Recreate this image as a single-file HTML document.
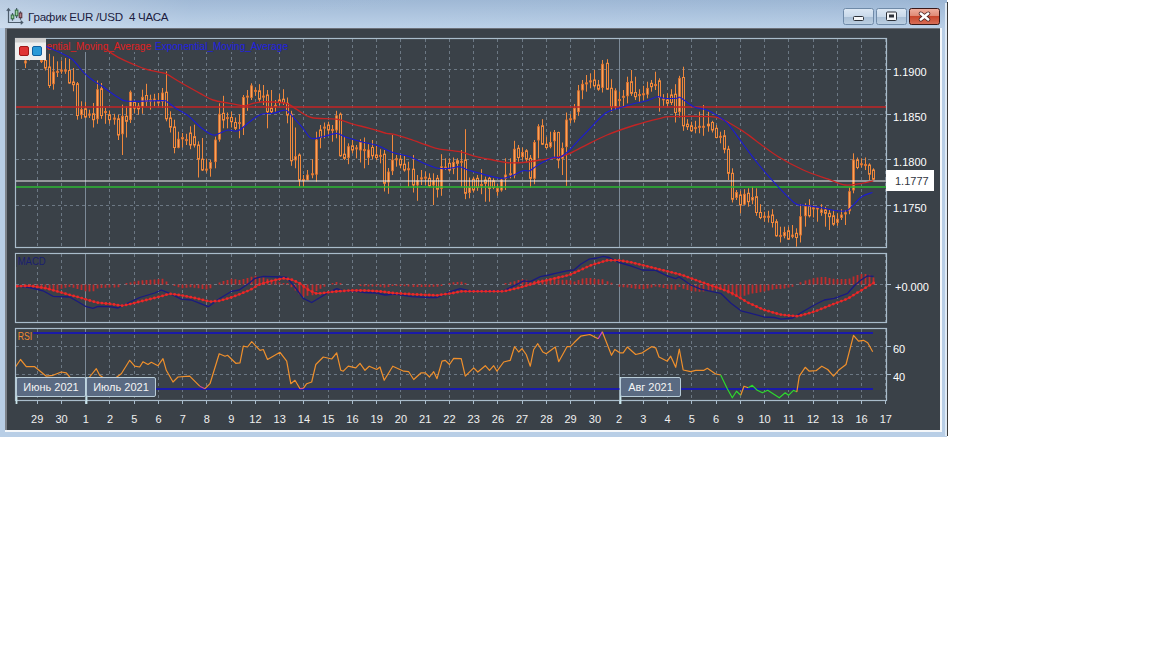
<!DOCTYPE html><html><head><meta charset="utf-8"><style>
html,body{margin:0;padding:0;background:#fff;width:1152px;height:648px;overflow:hidden}
svg{display:block}text{font-family:"Liberation Sans",sans-serif}
</style></head><body>
<svg width="1152" height="648" viewBox="0 0 1152 648">
<defs>
<linearGradient id="tb" x1="0" y1="0" x2="0" y2="1"><stop offset="0" stop-color="#9cb6d4"/><stop offset="1" stop-color="#b9cfe7"/></linearGradient>
<linearGradient id="tbv" x1="0" y1="0" x2="1" y2="0"><stop offset="0" stop-color="#ffffff" stop-opacity="0.28"/><stop offset="0.2" stop-color="#ffffff" stop-opacity="0.05"/><stop offset="1" stop-color="#ffffff" stop-opacity="0"/></linearGradient>
<linearGradient id="btn" x1="0" y1="0" x2="0" y2="1"><stop offset="0" stop-color="#dde8f4"/><stop offset="0.5" stop-color="#c9d9ea"/><stop offset="0.52" stop-color="#a9bfd6"/><stop offset="1" stop-color="#bccfe2"/></linearGradient>
<linearGradient id="cls" x1="0" y1="0" x2="0" y2="1"><stop offset="0" stop-color="#f0b0a0"/><stop offset="0.45" stop-color="#e08a76"/><stop offset="0.5" stop-color="#c8462c"/><stop offset="1" stop-color="#d8705a"/></linearGradient>
<clipPath id="cmain"><rect x="16" y="39" width="870" height="208"/></clipPath>
<clipPath id="cmacd"><rect x="16" y="254" width="870" height="68"/></clipPath>
<clipPath id="crsi"><rect x="16" y="329" width="870" height="71"/></clipPath>
<clipPath id="rsilow"><rect x="16" y="389" width="870" height="12"/></clipPath>
<clipPath id="rsihigh"><rect x="16" y="329" width="870" height="4"/></clipPath>
</defs>
<rect x="0" y="0" width="947" height="437" fill="#b8cee6"/>
<rect x="0" y="0" width="947" height="28" fill="url(#tb)"/>
<rect x="0" y="0" width="947" height="28" fill="url(#tbv)"/>
<rect x="945" y="3" width="2" height="433" fill="#dfeaf5"/>
<rect x="947" y="2" width="1" height="434" fill="#3a3a3a"/>
<rect x="5" y="28" width="937" height="404" fill="#f4f7fa"/>
<rect x="5" y="28" width="935" height="1" fill="#6c7078"/>
<rect x="5" y="28" width="2" height="402" fill="#7c828a"/>
<rect x="7" y="29" width="933" height="401" fill="#3a4148"/>
<g fill="none" stroke="#4c5c6c" stroke-width="1.2">
<path d="M8.5 9 V22.5 H22.5"/><path d="M6.8 10.8 L8.5 8.8 L10.2 10.8"/><path d="M20.7 20.8 L22.7 22.5 L20.7 24.2"/>
<path d="M12.5 13 V20.7 M16.6 8 V18 M20.5 11.2 V19.7"/>
</g>
<rect x="11.2" y="15" width="2.6" height="3.8" fill="#9fd0a0" stroke="#2e6a3e" stroke-width="1"/>
<rect x="15.3" y="10.1" width="2.6" height="5.7" fill="#9fd0a0" stroke="#2e6a3e" stroke-width="1"/>
<rect x="19.2" y="13" width="2.6" height="4.7" fill="#b08088" stroke="#5a3038" stroke-width="1"/>
<text x="28" y="20.5" font-size="11.6" fill="#1c1c40" xml:space="preserve" textLength="140.5" lengthAdjust="spacing">График EUR /USD  4 ЧАСА</text>
<rect x="843.5" y="8.5" width="30" height="16" rx="2" fill="url(#btn)" stroke="#6f8aa8" stroke-width="1"/>
<rect x="876.5" y="8.5" width="30" height="16" rx="2" fill="url(#btn)" stroke="#6f8aa8" stroke-width="1"/>
<rect x="909.5" y="8.5" width="30" height="16" rx="2" fill="url(#cls)" stroke="#3a1818" stroke-width="1"/>
<rect x="853.5" y="16.5" width="10" height="4" rx="1" fill="#f4f6f8" stroke="#2c3038" stroke-width="1"/>
<rect x="886.5" y="12" width="10" height="8.5" rx="1" fill="#f4f6f8" stroke="#2c3038" stroke-width="1"/>
<rect x="889" y="14.5" width="5" height="3" fill="#2c3038"/>
<path d="M920.8 13.6 L928.2 19.4 M928.2 13.6 L920.8 19.4" stroke="#4a2424" stroke-width="4.2" stroke-linecap="round"/>
<path d="M920.8 13.6 L928.2 19.4 M928.2 13.6 L920.8 19.4" stroke="#ffffff" stroke-width="2.6" stroke-linecap="round"/>
<line x1="37.5" y1="39" x2="37.5" y2="247" stroke="#6c7884" stroke-width="1" stroke-dasharray="3,3"/>
<line x1="61.5" y1="39" x2="61.5" y2="247" stroke="#6c7884" stroke-width="1" stroke-dasharray="3,3"/>
<line x1="85.5" y1="39" x2="85.5" y2="247" stroke="#7c8a98" stroke-width="1"/>
<line x1="109.5" y1="39" x2="109.5" y2="247" stroke="#6c7884" stroke-width="1" stroke-dasharray="3,3"/>
<line x1="134.5" y1="39" x2="134.5" y2="247" stroke="#6c7884" stroke-width="1" stroke-dasharray="3,3"/>
<line x1="158.5" y1="39" x2="158.5" y2="247" stroke="#6c7884" stroke-width="1" stroke-dasharray="3,3"/>
<line x1="182.5" y1="39" x2="182.5" y2="247" stroke="#6c7884" stroke-width="1" stroke-dasharray="3,3"/>
<line x1="206.5" y1="39" x2="206.5" y2="247" stroke="#6c7884" stroke-width="1" stroke-dasharray="3,3"/>
<line x1="231.5" y1="39" x2="231.5" y2="247" stroke="#6c7884" stroke-width="1" stroke-dasharray="3,3"/>
<line x1="255.5" y1="39" x2="255.5" y2="247" stroke="#6c7884" stroke-width="1" stroke-dasharray="3,3"/>
<line x1="279.5" y1="39" x2="279.5" y2="247" stroke="#6c7884" stroke-width="1" stroke-dasharray="3,3"/>
<line x1="303.5" y1="39" x2="303.5" y2="247" stroke="#6c7884" stroke-width="1" stroke-dasharray="3,3"/>
<line x1="328.5" y1="39" x2="328.5" y2="247" stroke="#6c7884" stroke-width="1" stroke-dasharray="3,3"/>
<line x1="352.5" y1="39" x2="352.5" y2="247" stroke="#6c7884" stroke-width="1" stroke-dasharray="3,3"/>
<line x1="376.5" y1="39" x2="376.5" y2="247" stroke="#6c7884" stroke-width="1" stroke-dasharray="3,3"/>
<line x1="400.5" y1="39" x2="400.5" y2="247" stroke="#6c7884" stroke-width="1" stroke-dasharray="3,3"/>
<line x1="425.5" y1="39" x2="425.5" y2="247" stroke="#6c7884" stroke-width="1" stroke-dasharray="3,3"/>
<line x1="449.5" y1="39" x2="449.5" y2="247" stroke="#6c7884" stroke-width="1" stroke-dasharray="3,3"/>
<line x1="473.5" y1="39" x2="473.5" y2="247" stroke="#6c7884" stroke-width="1" stroke-dasharray="3,3"/>
<line x1="497.5" y1="39" x2="497.5" y2="247" stroke="#6c7884" stroke-width="1" stroke-dasharray="3,3"/>
<line x1="522.5" y1="39" x2="522.5" y2="247" stroke="#6c7884" stroke-width="1" stroke-dasharray="3,3"/>
<line x1="546.5" y1="39" x2="546.5" y2="247" stroke="#6c7884" stroke-width="1" stroke-dasharray="3,3"/>
<line x1="570.5" y1="39" x2="570.5" y2="247" stroke="#6c7884" stroke-width="1" stroke-dasharray="3,3"/>
<line x1="594.5" y1="39" x2="594.5" y2="247" stroke="#6c7884" stroke-width="1" stroke-dasharray="3,3"/>
<line x1="619.5" y1="39" x2="619.5" y2="247" stroke="#7c8a98" stroke-width="1"/>
<line x1="643.5" y1="39" x2="643.5" y2="247" stroke="#6c7884" stroke-width="1" stroke-dasharray="3,3"/>
<line x1="667.5" y1="39" x2="667.5" y2="247" stroke="#6c7884" stroke-width="1" stroke-dasharray="3,3"/>
<line x1="691.5" y1="39" x2="691.5" y2="247" stroke="#6c7884" stroke-width="1" stroke-dasharray="3,3"/>
<line x1="716.5" y1="39" x2="716.5" y2="247" stroke="#6c7884" stroke-width="1" stroke-dasharray="3,3"/>
<line x1="740.5" y1="39" x2="740.5" y2="247" stroke="#6c7884" stroke-width="1" stroke-dasharray="3,3"/>
<line x1="764.5" y1="39" x2="764.5" y2="247" stroke="#6c7884" stroke-width="1" stroke-dasharray="3,3"/>
<line x1="788.5" y1="39" x2="788.5" y2="247" stroke="#6c7884" stroke-width="1" stroke-dasharray="3,3"/>
<line x1="813.5" y1="39" x2="813.5" y2="247" stroke="#6c7884" stroke-width="1" stroke-dasharray="3,3"/>
<line x1="837.5" y1="39" x2="837.5" y2="247" stroke="#6c7884" stroke-width="1" stroke-dasharray="3,3"/>
<line x1="861.5" y1="39" x2="861.5" y2="247" stroke="#6c7884" stroke-width="1" stroke-dasharray="3,3"/>
<line x1="885.5" y1="39" x2="885.5" y2="247" stroke="#6c7884" stroke-width="1" stroke-dasharray="3,3"/>
<line x1="37.5" y1="254" x2="37.5" y2="322" stroke="#6c7884" stroke-width="1" stroke-dasharray="3,3"/>
<line x1="61.5" y1="254" x2="61.5" y2="322" stroke="#6c7884" stroke-width="1" stroke-dasharray="3,3"/>
<line x1="85.5" y1="254" x2="85.5" y2="322" stroke="#7c8a98" stroke-width="1"/>
<line x1="109.5" y1="254" x2="109.5" y2="322" stroke="#6c7884" stroke-width="1" stroke-dasharray="3,3"/>
<line x1="134.5" y1="254" x2="134.5" y2="322" stroke="#6c7884" stroke-width="1" stroke-dasharray="3,3"/>
<line x1="158.5" y1="254" x2="158.5" y2="322" stroke="#6c7884" stroke-width="1" stroke-dasharray="3,3"/>
<line x1="182.5" y1="254" x2="182.5" y2="322" stroke="#6c7884" stroke-width="1" stroke-dasharray="3,3"/>
<line x1="206.5" y1="254" x2="206.5" y2="322" stroke="#6c7884" stroke-width="1" stroke-dasharray="3,3"/>
<line x1="231.5" y1="254" x2="231.5" y2="322" stroke="#6c7884" stroke-width="1" stroke-dasharray="3,3"/>
<line x1="255.5" y1="254" x2="255.5" y2="322" stroke="#6c7884" stroke-width="1" stroke-dasharray="3,3"/>
<line x1="279.5" y1="254" x2="279.5" y2="322" stroke="#6c7884" stroke-width="1" stroke-dasharray="3,3"/>
<line x1="303.5" y1="254" x2="303.5" y2="322" stroke="#6c7884" stroke-width="1" stroke-dasharray="3,3"/>
<line x1="328.5" y1="254" x2="328.5" y2="322" stroke="#6c7884" stroke-width="1" stroke-dasharray="3,3"/>
<line x1="352.5" y1="254" x2="352.5" y2="322" stroke="#6c7884" stroke-width="1" stroke-dasharray="3,3"/>
<line x1="376.5" y1="254" x2="376.5" y2="322" stroke="#6c7884" stroke-width="1" stroke-dasharray="3,3"/>
<line x1="400.5" y1="254" x2="400.5" y2="322" stroke="#6c7884" stroke-width="1" stroke-dasharray="3,3"/>
<line x1="425.5" y1="254" x2="425.5" y2="322" stroke="#6c7884" stroke-width="1" stroke-dasharray="3,3"/>
<line x1="449.5" y1="254" x2="449.5" y2="322" stroke="#6c7884" stroke-width="1" stroke-dasharray="3,3"/>
<line x1="473.5" y1="254" x2="473.5" y2="322" stroke="#6c7884" stroke-width="1" stroke-dasharray="3,3"/>
<line x1="497.5" y1="254" x2="497.5" y2="322" stroke="#6c7884" stroke-width="1" stroke-dasharray="3,3"/>
<line x1="522.5" y1="254" x2="522.5" y2="322" stroke="#6c7884" stroke-width="1" stroke-dasharray="3,3"/>
<line x1="546.5" y1="254" x2="546.5" y2="322" stroke="#6c7884" stroke-width="1" stroke-dasharray="3,3"/>
<line x1="570.5" y1="254" x2="570.5" y2="322" stroke="#6c7884" stroke-width="1" stroke-dasharray="3,3"/>
<line x1="594.5" y1="254" x2="594.5" y2="322" stroke="#6c7884" stroke-width="1" stroke-dasharray="3,3"/>
<line x1="619.5" y1="254" x2="619.5" y2="322" stroke="#7c8a98" stroke-width="1"/>
<line x1="643.5" y1="254" x2="643.5" y2="322" stroke="#6c7884" stroke-width="1" stroke-dasharray="3,3"/>
<line x1="667.5" y1="254" x2="667.5" y2="322" stroke="#6c7884" stroke-width="1" stroke-dasharray="3,3"/>
<line x1="691.5" y1="254" x2="691.5" y2="322" stroke="#6c7884" stroke-width="1" stroke-dasharray="3,3"/>
<line x1="716.5" y1="254" x2="716.5" y2="322" stroke="#6c7884" stroke-width="1" stroke-dasharray="3,3"/>
<line x1="740.5" y1="254" x2="740.5" y2="322" stroke="#6c7884" stroke-width="1" stroke-dasharray="3,3"/>
<line x1="764.5" y1="254" x2="764.5" y2="322" stroke="#6c7884" stroke-width="1" stroke-dasharray="3,3"/>
<line x1="788.5" y1="254" x2="788.5" y2="322" stroke="#6c7884" stroke-width="1" stroke-dasharray="3,3"/>
<line x1="813.5" y1="254" x2="813.5" y2="322" stroke="#6c7884" stroke-width="1" stroke-dasharray="3,3"/>
<line x1="837.5" y1="254" x2="837.5" y2="322" stroke="#6c7884" stroke-width="1" stroke-dasharray="3,3"/>
<line x1="861.5" y1="254" x2="861.5" y2="322" stroke="#6c7884" stroke-width="1" stroke-dasharray="3,3"/>
<line x1="885.5" y1="254" x2="885.5" y2="322" stroke="#6c7884" stroke-width="1" stroke-dasharray="3,3"/>
<line x1="37.5" y1="329" x2="37.5" y2="400" stroke="#6c7884" stroke-width="1" stroke-dasharray="3,3"/>
<line x1="61.5" y1="329" x2="61.5" y2="400" stroke="#6c7884" stroke-width="1" stroke-dasharray="3,3"/>
<line x1="85.5" y1="329" x2="85.5" y2="400" stroke="#7c8a98" stroke-width="1"/>
<line x1="109.5" y1="329" x2="109.5" y2="400" stroke="#6c7884" stroke-width="1" stroke-dasharray="3,3"/>
<line x1="134.5" y1="329" x2="134.5" y2="400" stroke="#6c7884" stroke-width="1" stroke-dasharray="3,3"/>
<line x1="158.5" y1="329" x2="158.5" y2="400" stroke="#6c7884" stroke-width="1" stroke-dasharray="3,3"/>
<line x1="182.5" y1="329" x2="182.5" y2="400" stroke="#6c7884" stroke-width="1" stroke-dasharray="3,3"/>
<line x1="206.5" y1="329" x2="206.5" y2="400" stroke="#6c7884" stroke-width="1" stroke-dasharray="3,3"/>
<line x1="231.5" y1="329" x2="231.5" y2="400" stroke="#6c7884" stroke-width="1" stroke-dasharray="3,3"/>
<line x1="255.5" y1="329" x2="255.5" y2="400" stroke="#6c7884" stroke-width="1" stroke-dasharray="3,3"/>
<line x1="279.5" y1="329" x2="279.5" y2="400" stroke="#6c7884" stroke-width="1" stroke-dasharray="3,3"/>
<line x1="303.5" y1="329" x2="303.5" y2="400" stroke="#6c7884" stroke-width="1" stroke-dasharray="3,3"/>
<line x1="328.5" y1="329" x2="328.5" y2="400" stroke="#6c7884" stroke-width="1" stroke-dasharray="3,3"/>
<line x1="352.5" y1="329" x2="352.5" y2="400" stroke="#6c7884" stroke-width="1" stroke-dasharray="3,3"/>
<line x1="376.5" y1="329" x2="376.5" y2="400" stroke="#6c7884" stroke-width="1" stroke-dasharray="3,3"/>
<line x1="400.5" y1="329" x2="400.5" y2="400" stroke="#6c7884" stroke-width="1" stroke-dasharray="3,3"/>
<line x1="425.5" y1="329" x2="425.5" y2="400" stroke="#6c7884" stroke-width="1" stroke-dasharray="3,3"/>
<line x1="449.5" y1="329" x2="449.5" y2="400" stroke="#6c7884" stroke-width="1" stroke-dasharray="3,3"/>
<line x1="473.5" y1="329" x2="473.5" y2="400" stroke="#6c7884" stroke-width="1" stroke-dasharray="3,3"/>
<line x1="497.5" y1="329" x2="497.5" y2="400" stroke="#6c7884" stroke-width="1" stroke-dasharray="3,3"/>
<line x1="522.5" y1="329" x2="522.5" y2="400" stroke="#6c7884" stroke-width="1" stroke-dasharray="3,3"/>
<line x1="546.5" y1="329" x2="546.5" y2="400" stroke="#6c7884" stroke-width="1" stroke-dasharray="3,3"/>
<line x1="570.5" y1="329" x2="570.5" y2="400" stroke="#6c7884" stroke-width="1" stroke-dasharray="3,3"/>
<line x1="594.5" y1="329" x2="594.5" y2="400" stroke="#6c7884" stroke-width="1" stroke-dasharray="3,3"/>
<line x1="619.5" y1="329" x2="619.5" y2="400" stroke="#7c8a98" stroke-width="1"/>
<line x1="643.5" y1="329" x2="643.5" y2="400" stroke="#6c7884" stroke-width="1" stroke-dasharray="3,3"/>
<line x1="667.5" y1="329" x2="667.5" y2="400" stroke="#6c7884" stroke-width="1" stroke-dasharray="3,3"/>
<line x1="691.5" y1="329" x2="691.5" y2="400" stroke="#6c7884" stroke-width="1" stroke-dasharray="3,3"/>
<line x1="716.5" y1="329" x2="716.5" y2="400" stroke="#6c7884" stroke-width="1" stroke-dasharray="3,3"/>
<line x1="740.5" y1="329" x2="740.5" y2="400" stroke="#6c7884" stroke-width="1" stroke-dasharray="3,3"/>
<line x1="764.5" y1="329" x2="764.5" y2="400" stroke="#6c7884" stroke-width="1" stroke-dasharray="3,3"/>
<line x1="788.5" y1="329" x2="788.5" y2="400" stroke="#6c7884" stroke-width="1" stroke-dasharray="3,3"/>
<line x1="813.5" y1="329" x2="813.5" y2="400" stroke="#6c7884" stroke-width="1" stroke-dasharray="3,3"/>
<line x1="837.5" y1="329" x2="837.5" y2="400" stroke="#6c7884" stroke-width="1" stroke-dasharray="3,3"/>
<line x1="861.5" y1="329" x2="861.5" y2="400" stroke="#6c7884" stroke-width="1" stroke-dasharray="3,3"/>
<line x1="885.5" y1="329" x2="885.5" y2="400" stroke="#6c7884" stroke-width="1" stroke-dasharray="3,3"/>
<line x1="16" y1="69.5" x2="886" y2="69.5" stroke="#6c7884" stroke-width="1" stroke-dasharray="3,3"/>
<line x1="16" y1="114.5" x2="886" y2="114.5" stroke="#6c7884" stroke-width="1" stroke-dasharray="3,3"/>
<line x1="16" y1="159.5" x2="886" y2="159.5" stroke="#6c7884" stroke-width="1" stroke-dasharray="3,3"/>
<line x1="16" y1="205.5" x2="886" y2="205.5" stroke="#6c7884" stroke-width="1" stroke-dasharray="3,3"/>
<line x1="16" y1="284.5" x2="886" y2="284.5" stroke="#6c7884" stroke-width="1" stroke-dasharray="3,3"/>
<line x1="16" y1="346.5" x2="886" y2="346.5" stroke="#6c7884" stroke-width="1" stroke-dasharray="3,3"/>
<line x1="16" y1="374.5" x2="886" y2="374.5" stroke="#6c7884" stroke-width="1" stroke-dasharray="3,3"/>
<rect x="15.5" y="38.5" width="871" height="209" fill="none" stroke="#a9bccb" stroke-width="1.2"/>
<rect x="15.5" y="253.5" width="871" height="69" fill="none" stroke="#a9bccb" stroke-width="1.2"/>
<rect x="15.5" y="328.5" width="871" height="72" fill="none" stroke="#a9bccb" stroke-width="1.2"/>
<line x1="886" y1="69.5" x2="891" y2="69.5" stroke="#a9bccb" stroke-width="1"/>
<line x1="886" y1="114.5" x2="891" y2="114.5" stroke="#a9bccb" stroke-width="1"/>
<line x1="886" y1="159.5" x2="891" y2="159.5" stroke="#a9bccb" stroke-width="1"/>
<line x1="886" y1="205.5" x2="891" y2="205.5" stroke="#a9bccb" stroke-width="1"/>
<line x1="886" y1="284.5" x2="891" y2="284.5" stroke="#a9bccb" stroke-width="1"/>
<line x1="886" y1="346.5" x2="891" y2="346.5" stroke="#a9bccb" stroke-width="1"/>
<line x1="886" y1="374.5" x2="891" y2="374.5" stroke="#a9bccb" stroke-width="1"/>
<line x1="37.5" y1="400" x2="37.5" y2="404" stroke="#a9bccb" stroke-width="1"/>
<line x1="61.5" y1="400" x2="61.5" y2="404" stroke="#a9bccb" stroke-width="1"/>
<line x1="85.5" y1="400" x2="85.5" y2="404" stroke="#a9bccb" stroke-width="1"/>
<line x1="109.5" y1="400" x2="109.5" y2="404" stroke="#a9bccb" stroke-width="1"/>
<line x1="134.5" y1="400" x2="134.5" y2="404" stroke="#a9bccb" stroke-width="1"/>
<line x1="158.5" y1="400" x2="158.5" y2="404" stroke="#a9bccb" stroke-width="1"/>
<line x1="182.5" y1="400" x2="182.5" y2="404" stroke="#a9bccb" stroke-width="1"/>
<line x1="206.5" y1="400" x2="206.5" y2="404" stroke="#a9bccb" stroke-width="1"/>
<line x1="231.5" y1="400" x2="231.5" y2="404" stroke="#a9bccb" stroke-width="1"/>
<line x1="255.5" y1="400" x2="255.5" y2="404" stroke="#a9bccb" stroke-width="1"/>
<line x1="279.5" y1="400" x2="279.5" y2="404" stroke="#a9bccb" stroke-width="1"/>
<line x1="303.5" y1="400" x2="303.5" y2="404" stroke="#a9bccb" stroke-width="1"/>
<line x1="328.5" y1="400" x2="328.5" y2="404" stroke="#a9bccb" stroke-width="1"/>
<line x1="352.5" y1="400" x2="352.5" y2="404" stroke="#a9bccb" stroke-width="1"/>
<line x1="376.5" y1="400" x2="376.5" y2="404" stroke="#a9bccb" stroke-width="1"/>
<line x1="400.5" y1="400" x2="400.5" y2="404" stroke="#a9bccb" stroke-width="1"/>
<line x1="425.5" y1="400" x2="425.5" y2="404" stroke="#a9bccb" stroke-width="1"/>
<line x1="449.5" y1="400" x2="449.5" y2="404" stroke="#a9bccb" stroke-width="1"/>
<line x1="473.5" y1="400" x2="473.5" y2="404" stroke="#a9bccb" stroke-width="1"/>
<line x1="497.5" y1="400" x2="497.5" y2="404" stroke="#a9bccb" stroke-width="1"/>
<line x1="522.5" y1="400" x2="522.5" y2="404" stroke="#a9bccb" stroke-width="1"/>
<line x1="546.5" y1="400" x2="546.5" y2="404" stroke="#a9bccb" stroke-width="1"/>
<line x1="570.5" y1="400" x2="570.5" y2="404" stroke="#a9bccb" stroke-width="1"/>
<line x1="594.5" y1="400" x2="594.5" y2="404" stroke="#a9bccb" stroke-width="1"/>
<line x1="619.5" y1="400" x2="619.5" y2="404" stroke="#a9bccb" stroke-width="1"/>
<line x1="643.5" y1="400" x2="643.5" y2="404" stroke="#a9bccb" stroke-width="1"/>
<line x1="667.5" y1="400" x2="667.5" y2="404" stroke="#a9bccb" stroke-width="1"/>
<line x1="691.5" y1="400" x2="691.5" y2="404" stroke="#a9bccb" stroke-width="1"/>
<line x1="716.5" y1="400" x2="716.5" y2="404" stroke="#a9bccb" stroke-width="1"/>
<line x1="740.5" y1="400" x2="740.5" y2="404" stroke="#a9bccb" stroke-width="1"/>
<line x1="764.5" y1="400" x2="764.5" y2="404" stroke="#a9bccb" stroke-width="1"/>
<line x1="788.5" y1="400" x2="788.5" y2="404" stroke="#a9bccb" stroke-width="1"/>
<line x1="813.5" y1="400" x2="813.5" y2="404" stroke="#a9bccb" stroke-width="1"/>
<line x1="837.5" y1="400" x2="837.5" y2="404" stroke="#a9bccb" stroke-width="1"/>
<line x1="861.5" y1="400" x2="861.5" y2="404" stroke="#a9bccb" stroke-width="1"/>
<line x1="885.5" y1="400" x2="885.5" y2="404" stroke="#a9bccb" stroke-width="1"/>
<g clip-path="url(#cmain)">
<rect x="16" y="39" width="274" height="13" fill="#3a4148"/>
<text x="18" y="50" font-size="11" fill="#e02020" textLength="133" lengthAdjust="spacingAndGlyphs">Exponential_Moving_Average</text>
<text x="155" y="50" font-size="11" fill="#2020e0" textLength="133" lengthAdjust="spacingAndGlyphs">Exponential_Moving_Average</text>
<path d="M25.5 59.7V68.0M29.5 55.0V60.5M33.5 55.0V60.0M37.5 55.0V60.0M41.5 59.7V63.0M45.5 54.7V70.5M49.5 53.8V88.0M53.5 56.3V89.7M57.5 61.3V77.0M61.5 60.5V73.8M65.5 58.0V73.8M69.5 58.8V83.8M73.5 68.0V91.3M77.5 82.0V119.7M81.5 101.3V118.8M85.5 102.0V118.0M89.5 109.7V118.0M93.5 103.0V127.5M97.5 80.5V123.8M101.5 83.0V118.8M105.5 108.0V123.8M109.5 110.5V123.8M114.5 113.8V124.7M118.5 114.7V140.0M122.5 104.7V155.0M126.5 106.3V137.5M130.5 90.5V123.0M134.5 101.3V113.0M138.5 103.0V114.7M142.5 89.7V113.8M146.5 83.8V106.3M150.5 94.7V109.7M154.5 93.8V106.3M158.5 93.0V106.3M162.5 88.0V108.0M166.5 71.3V121.3M170.5 111.3V132.5M174.5 119.7V153.3M178.5 131.7V148.3M182.5 133.0V147.5M186.5 133.8V145.0M190.5 126.3V149.2M194.5 124.7V147.5M198.5 141.3V177.5M202.5 138.0V171.0M206.5 158.7V172.6M210.5 160.0V176.7M215.5 136.7V168.3M219.5 103.3V141.7M223.5 95.8V128.3M227.5 112.5V128.3M231.5 111.7V127.5M235.5 117.5V130.0M239.5 114.2V138.3M243.5 95.0V135.0M247.5 90.0V110.8M251.5 83.3V100.0M255.5 87.5V95.8M259.5 84.2V101.7M263.5 85.0V105.0M267.5 90.0V128.3M271.5 90.0V113.3M275.5 100.0V111.7M279.5 94.2V105.0M283.5 89.2V105.0M287.5 97.5V123.3M291.5 110.8V165.8M295.5 127.5V168.3M299.5 153.3V186.7M303.5 175.0V186.7M307.5 170.0V180.0M312.5 159.2V178.3M316.5 131.7V181.7M320.5 125.0V148.3M324.5 122.5V138.3M328.5 121.7V135.8M332.5 125.0V141.7M336.5 110.8V138.3M340.5 112.5V156.7M344.5 136.7V160.0M348.5 143.3V164.2M352.5 140.0V153.3M356.5 145.0V158.3M360.5 139.2V162.5M364.5 137.5V168.3M368.5 144.2V165.0M372.5 140.0V159.2M376.5 145.8V160.0M380.5 149.2V163.3M384.5 150.0V191.5M388.5 168.0V193.8M392.5 135.0V175.0M396.5 155.0V166.7M400.5 155.0V168.3M404.5 155.8V171.7M408.5 161.7V186.7M413.5 155.0V192.5M417.5 175.0V200.8M421.5 170.0V185.0M425.5 171.7V185.0M429.5 173.3V187.5M433.5 173.3V205.0M437.5 175.0V197.5M441.5 154.2V195.8M445.5 158.3V170.0M449.5 158.3V171.7M453.5 157.5V174.2M457.5 158.3V180.0M461.5 150.0V186.7M465.5 129.2V199.2M469.5 177.5V198.3M473.5 176.7V192.5M477.5 175.0V190.8M481.5 169.2V194.2M485.5 176.7V201.7M489.5 176.7V201.7M493.5 178.3V189.2M497.5 184.2V195.8M501.5 178.3V191.7M505.5 158.3V190.0M510.5 158.3V178.3M514.5 140.8V178.3M518.5 145.0V161.7M522.5 147.5V160.0M526.5 149.2V162.5M530.5 155.0V187.5M534.5 140.0V184.2M538.5 124.2V158.3M542.5 119.2V145.0M546.5 136.7V149.2M550.5 131.7V148.3M554.5 130.0V158.3M558.5 131.7V168.3M562.5 142.5V175.0M566.5 112.5V185.8M570.5 114.2V123.3M574.5 104.0V122.5M578.5 85.0V115.8M582.5 80.0V99.2M586.5 75.0V91.7M590.5 73.3V88.3M594.5 70.0V87.5M598.5 80.0V90.8M602.5 60.0V92.5M607.5 59.2V90.0M611.5 79.2V111.7M615.5 88.3V110.0M619.5 91.7V106.7M623.5 90.0V106.7M627.5 76.7V103.3M631.5 70.0V95.8M635.5 76.7V100.0M639.5 89.2V101.7M643.5 85.8V100.0M647.5 81.7V98.3M651.5 80.0V91.7M655.5 71.7V90.0M659.5 78.3V111.7M663.5 94.2V105.8M667.5 93.3V106.7M671.5 89.2V105.0M675.5 84.2V122.5M679.5 75.8V117.5M683.5 66.7V130.8M687.5 119.2V130.0M691.5 121.7V131.7M695.5 120.8V133.3M699.5 111.7V133.3M703.5 105.0V135.8M708.5 111.7V131.7M712.5 120.8V132.5M716.5 125.0V138.3M720.5 131.7V143.3M724.5 130.0V153.3M728.5 145.8V180.0M732.5 168.3V202.5M736.5 190.0V200.0M740.5 190.8V213.3M744.5 189.2V205.0M748.5 188.3V206.7M752.5 186.7V204.2M756.5 188.3V215.8M760.5 204.2V219.2M764.5 211.7V221.7M768.5 210.8V222.5M772.5 209.2V227.5M776.5 219.2V236.7M780.5 226.7V242.5M784.5 226.7V238.3M788.5 226.7V240.0M792.5 225.0V238.3M796.5 228.3V246.7M800.5 204.2V242.5M805.5 203.3V226.7M809.5 199.2V217.5M813.5 205.0V217.5M817.5 207.5V221.7M821.5 204.2V215.8M825.5 206.7V226.7M829.5 210.0V230.0M833.5 210.0V225.8M837.5 213.3V225.8M841.5 209.2V220.0M845.5 210.0V225.0M849.5 187.5V214.2M853.5 153.3V193.3M857.5 157.5V169.2M861.5 158.3V167.5M865.5 157.5V170.0M869.5 163.3V180.0M873.5 168.3V180.0" stroke="#f0883c" stroke-width="1" fill="none"/>
<g fill="#3a4148" stroke="#f0883c" stroke-width="1"><rect x="44.5" y="60.5" width="2" height="7.5"/><rect x="48.5" y="67.0" width="2" height="18.5"/><rect x="68.5" y="70.5" width="2" height="12.5"/><rect x="72.5" y="82.0" width="2" height="2.7"/><rect x="76.5" y="83.8" width="2" height="31.7"/><rect x="84.5" y="108.8" width="2" height="8.2"/><rect x="92.5" y="113.8" width="2" height="5.9"/><rect x="100.5" y="88.8" width="2" height="26.7"/><rect x="108.5" y="114.7" width="2" height="5.0"/><rect x="117.5" y="118.8" width="2" height="16.2"/><rect x="125.5" y="116.3" width="2" height="5.0"/><rect x="133.5" y="102.2" width="2" height="5.8"/><rect x="137.5" y="106.3" width="2" height="2.5"/><rect x="145.5" y="95.5" width="2" height="5.8"/><rect x="165.5" y="92.2" width="2" height="26.6"/><rect x="169.5" y="118.0" width="2" height="9.2"/><rect x="173.5" y="127.0" width="2" height="20.5"/><rect x="189.5" y="133.0" width="2" height="12.0"/><rect x="193.5" y="136.7" width="2" height="8.3"/><rect x="197.5" y="145.0" width="2" height="14.2"/><rect x="201.5" y="159.2" width="2" height="10.8"/><rect x="222.5" y="113.3" width="2" height="6.7"/><rect x="230.5" y="117.5" width="2" height="4.2"/><rect x="234.5" y="122.5" width="2" height="5.8"/><rect x="258.5" y="90.8" width="2" height="8.4"/><rect x="266.5" y="95.0" width="2" height="16.7"/><rect x="270.5" y="108.3" width="2" height="3.4"/><rect x="278.5" y="100.0" width="2" height="2.5"/><rect x="282.5" y="99.2" width="2" height="3.3"/><rect x="286.5" y="103.3" width="2" height="11.7"/><rect x="290.5" y="114.2" width="2" height="46.6"/><rect x="298.5" y="155.0" width="2" height="25.0"/><rect x="319.5" y="130.0" width="2" height="7.5"/><rect x="327.5" y="125.0" width="2" height="5.0"/><rect x="339.5" y="114.2" width="2" height="41.6"/><rect x="343.5" y="154.2" width="2" height="4.1"/><rect x="351.5" y="145.8" width="2" height="4.2"/><rect x="371.5" y="147.5" width="2" height="8.3"/><rect x="375.5" y="155.0" width="2" height="2.5"/><rect x="383.5" y="154.2" width="2" height="29.1"/><rect x="399.5" y="159.2" width="2" height="5.8"/><rect x="403.5" y="164.2" width="2" height="5.8"/><rect x="412.5" y="169.2" width="2" height="15.8"/><rect x="428.5" y="178.3" width="2" height="7.5"/><rect x="436.5" y="178.3" width="2" height="10.9"/><rect x="448.5" y="163.3" width="2" height="6.7"/><rect x="456.5" y="160.8" width="2" height="2.5"/><rect x="464.5" y="160.0" width="2" height="33.3"/><rect x="472.5" y="179.2" width="2" height="10.8"/><rect x="476.5" y="178.3" width="2" height="9.2"/><rect x="484.5" y="180.0" width="2" height="3.3"/><rect x="488.5" y="178.3" width="2" height="10.0"/><rect x="492.5" y="180.8" width="2" height="6.7"/><rect x="517.5" y="148.3" width="2" height="9.2"/><rect x="525.5" y="150.8" width="2" height="8.4"/><rect x="529.5" y="158.3" width="2" height="20.0"/><rect x="541.5" y="125.8" width="2" height="18.4"/><rect x="545.5" y="144.2" width="2" height="3.3"/><rect x="557.5" y="132.5" width="2" height="27.5"/><rect x="593.5" y="80.0" width="2" height="5.8"/><rect x="597.5" y="85.0" width="2" height="4.2"/><rect x="606.5" y="63.3" width="2" height="25.9"/><rect x="610.5" y="88.3" width="2" height="18.4"/><rect x="630.5" y="81.7" width="2" height="11.6"/><rect x="634.5" y="92.5" width="2" height="4.2"/><rect x="650.5" y="83.3" width="2" height="3.4"/><rect x="658.5" y="80.8" width="2" height="16.7"/><rect x="666.5" y="100.0" width="2" height="3.3"/><rect x="670.5" y="95.0" width="2" height="7.5"/><rect x="674.5" y="94.2" width="2" height="18.3"/><rect x="682.5" y="77.5" width="2" height="48.3"/><rect x="686.5" y="124.2" width="2" height="2.5"/><rect x="690.5" y="125.8" width="2" height="5.0"/><rect x="707.5" y="124.2" width="2" height="1.6"/><rect x="711.5" y="122.5" width="2" height="7.5"/><rect x="715.5" y="128.3" width="2" height="9.2"/><rect x="723.5" y="135.8" width="2" height="13.4"/><rect x="727.5" y="149.2" width="2" height="24.1"/><rect x="731.5" y="173.3" width="2" height="25.9"/><rect x="739.5" y="195.0" width="2" height="10.0"/><rect x="747.5" y="193.3" width="2" height="8.4"/><rect x="755.5" y="196.7" width="2" height="15.8"/><rect x="759.5" y="212.5" width="2" height="5.0"/><rect x="771.5" y="215.0" width="2" height="7.5"/><rect x="775.5" y="221.7" width="2" height="14.1"/><rect x="787.5" y="230.8" width="2" height="8.4"/><rect x="795.5" y="233.3" width="2" height="4.2"/><rect x="808.5" y="205.8" width="2" height="10.0"/><rect x="824.5" y="210.0" width="2" height="3.3"/><rect x="828.5" y="213.3" width="2" height="3.4"/><rect x="832.5" y="215.8" width="2" height="8.4"/><rect x="856.5" y="160.0" width="2" height="7.5"/><rect x="868.5" y="165.0" width="2" height="9.2"/><rect x="872.5" y="170.0" width="2" height="9.2"/></g>
<g fill="#fba35a" stroke="#d8702e" stroke-width="0.8"><rect x="24.4" y="61.0" width="2.2" height="2.0"/><rect x="28.4" y="57.0" width="2.2" height="1.2"/><rect x="32.4" y="57.0" width="2.2" height="1.2"/><rect x="36.4" y="57.0" width="2.2" height="1.2"/><rect x="40.4" y="60.5" width="2.2" height="1.2"/><rect x="52.4" y="72.0" width="2.2" height="11.8"/><rect x="56.4" y="71.3" width="2.2" height="1.2"/><rect x="60.4" y="70.0" width="2.2" height="1.2"/><rect x="64.4" y="70.0" width="2.2" height="1.2"/><rect x="80.4" y="109.7" width="2.2" height="5.0"/><rect x="88.4" y="114.0" width="2.2" height="1.2"/><rect x="96.4" y="89.7" width="2.2" height="29.1"/><rect x="104.4" y="111.5" width="2.2" height="1.2"/><rect x="113.4" y="118.0" width="2.2" height="1.2"/><rect x="121.4" y="116.3" width="2.2" height="17.5"/><rect x="129.4" y="92.2" width="2.2" height="27.5"/><rect x="141.4" y="97.2" width="2.2" height="9.1"/><rect x="149.4" y="99.7" width="2.2" height="1.6"/><rect x="153.4" y="99.0" width="2.2" height="1.5"/><rect x="157.4" y="101.5" width="2.2" height="1.5"/><rect x="161.4" y="93.0" width="2.2" height="8.3"/><rect x="177.4" y="139.2" width="2.2" height="8.3"/><rect x="181.4" y="137.5" width="2.2" height="1.5"/><rect x="185.4" y="139.5" width="2.2" height="1.2"/><rect x="205.4" y="169.0" width="2.2" height="1.2"/><rect x="209.4" y="162.5" width="2.2" height="5.8"/><rect x="214.4" y="140.0" width="2.2" height="21.7"/><rect x="218.4" y="114.2" width="2.2" height="25.0"/><rect x="226.4" y="117.5" width="2.2" height="1.2"/><rect x="238.4" y="122.5" width="2.2" height="1.2"/><rect x="242.4" y="97.5" width="2.2" height="29.2"/><rect x="246.4" y="96.0" width="2.2" height="1.2"/><rect x="250.4" y="85.8" width="2.2" height="11.7"/><rect x="254.4" y="90.3" width="2.2" height="1.2"/><rect x="262.4" y="96.0" width="2.2" height="1.2"/><rect x="274.4" y="105.3" width="2.2" height="1.2"/><rect x="294.4" y="156.7" width="2.2" height="3.3"/><rect x="302.4" y="179.5" width="2.2" height="1.2"/><rect x="306.4" y="175.0" width="2.2" height="5.0"/><rect x="311.4" y="173.7" width="2.2" height="1.2"/><rect x="315.4" y="140.0" width="2.2" height="34.2"/><rect x="323.4" y="127.0" width="2.2" height="1.2"/><rect x="331.4" y="129.5" width="2.2" height="1.2"/><rect x="335.4" y="115.8" width="2.2" height="14.2"/><rect x="347.4" y="146.7" width="2.2" height="10.8"/><rect x="355.4" y="147.8" width="2.2" height="1.2"/><rect x="359.4" y="142.5" width="2.2" height="7.5"/><rect x="363.4" y="149.5" width="2.2" height="1.2"/><rect x="367.4" y="150.0" width="2.2" height="7.5"/><rect x="379.4" y="155.3" width="2.2" height="1.2"/><rect x="387.4" y="172.0" width="2.2" height="10.0"/><rect x="391.4" y="160.0" width="2.2" height="10.8"/><rect x="395.4" y="158.7" width="2.2" height="1.2"/><rect x="407.4" y="168.7" width="2.2" height="1.2"/><rect x="416.4" y="180.8" width="2.2" height="4.2"/><rect x="420.4" y="177.8" width="2.2" height="1.2"/><rect x="424.4" y="177.0" width="2.2" height="1.2"/><rect x="432.4" y="180.8" width="2.2" height="4.2"/><rect x="440.4" y="166.7" width="2.2" height="21.6"/><rect x="444.4" y="167.0" width="2.2" height="1.2"/><rect x="452.4" y="162.5" width="2.2" height="5.8"/><rect x="460.4" y="161.2" width="2.2" height="1.2"/><rect x="468.4" y="187.5" width="2.2" height="5.0"/><rect x="480.4" y="184.5" width="2.2" height="1.2"/><rect x="496.4" y="188.3" width="2.2" height="3.4"/><rect x="500.4" y="180.0" width="2.2" height="10.0"/><rect x="504.4" y="175.0" width="2.2" height="3.3"/><rect x="509.4" y="173.7" width="2.2" height="1.2"/><rect x="513.4" y="149.2" width="2.2" height="25.8"/><rect x="521.4" y="152.5" width="2.2" height="4.2"/><rect x="533.4" y="142.5" width="2.2" height="35.8"/><rect x="537.4" y="126.7" width="2.2" height="13.3"/><rect x="549.4" y="142.5" width="2.2" height="4.2"/><rect x="553.4" y="132.5" width="2.2" height="8.3"/><rect x="561.4" y="148.3" width="2.2" height="10.0"/><rect x="565.4" y="120.0" width="2.2" height="26.7"/><rect x="569.4" y="118.7" width="2.2" height="1.2"/><rect x="573.4" y="108.3" width="2.2" height="10.9"/><rect x="577.4" y="90.8" width="2.2" height="20.9"/><rect x="581.4" y="84.2" width="2.2" height="5.8"/><rect x="585.4" y="82.8" width="2.2" height="1.2"/><rect x="589.4" y="80.8" width="2.2" height="1.2"/><rect x="601.4" y="64.2" width="2.2" height="23.3"/><rect x="614.4" y="90.8" width="2.2" height="15.9"/><rect x="618.4" y="99.5" width="2.2" height="1.2"/><rect x="622.4" y="96.2" width="2.2" height="1.2"/><rect x="626.4" y="82.5" width="2.2" height="13.3"/><rect x="638.4" y="94.5" width="2.2" height="1.2"/><rect x="642.4" y="93.7" width="2.2" height="1.2"/><rect x="646.4" y="88.3" width="2.2" height="5.9"/><rect x="654.4" y="84.5" width="2.2" height="1.2"/><rect x="662.4" y="98.7" width="2.2" height="1.2"/><rect x="678.4" y="78.3" width="2.2" height="33.4"/><rect x="694.4" y="127.5" width="2.2" height="1.2"/><rect x="698.4" y="126.2" width="2.2" height="1.2"/><rect x="702.4" y="126.2" width="2.2" height="1.2"/><rect x="719.4" y="136.2" width="2.2" height="1.2"/><rect x="735.4" y="192.5" width="2.2" height="5.0"/><rect x="743.4" y="194.2" width="2.2" height="10.0"/><rect x="751.4" y="197.5" width="2.2" height="2.5"/><rect x="763.4" y="216.2" width="2.2" height="1.2"/><rect x="767.4" y="216.2" width="2.2" height="1.2"/><rect x="779.4" y="235.3" width="2.2" height="1.2"/><rect x="783.4" y="232.5" width="2.2" height="3.3"/><rect x="791.4" y="235.0" width="2.2" height="1.7"/><rect x="799.4" y="216.7" width="2.2" height="18.3"/><rect x="804.4" y="206.7" width="2.2" height="9.1"/><rect x="812.4" y="207.8" width="2.2" height="1.2"/><rect x="816.4" y="207.8" width="2.2" height="1.2"/><rect x="820.4" y="210.0" width="2.2" height="2.5"/><rect x="836.4" y="219.2" width="2.2" height="3.3"/><rect x="840.4" y="215.0" width="2.2" height="2.5"/><rect x="844.4" y="212.8" width="2.2" height="1.2"/><rect x="848.4" y="191.7" width="2.2" height="19.1"/><rect x="852.4" y="160.0" width="2.2" height="30.0"/><rect x="860.4" y="163.7" width="2.2" height="1.2"/><rect x="864.4" y="164.5" width="2.2" height="1.2"/></g>
<line x1="15" y1="107" x2="886" y2="107" stroke="#c42424" stroke-width="1.7"/>
<line x1="15" y1="181" x2="886" y2="181" stroke="#efefef" stroke-width="1.1"/>
<line x1="15" y1="187" x2="886" y2="187" stroke="#2cb832" stroke-width="1.7"/>
<path d="M104.0,48.5C104.4,48.7 103.8,48.0 106.2,49.5C108.6,51.0 113.8,55.0 118.3,57.4C122.8,59.8 128.0,62.1 132.9,64.1C137.8,66.1 142.2,68.1 147.5,69.6C152.8,71.1 160.8,72.2 164.5,73.2C168.2,74.2 166.6,74.1 169.4,75.7C172.2,77.3 176.4,80.1 181.5,83.0C186.6,85.9 194.8,90.5 200.0,93.3C205.2,96.1 208.1,98.3 213.0,100.0C217.9,101.7 224.4,102.3 229.7,103.3C235.0,104.3 240.8,105.8 244.7,105.8C248.6,105.8 249.4,104.0 253.0,103.3C256.6,102.6 260.8,101.7 266.3,101.7C271.9,101.7 281.3,102.0 286.3,103.3C291.3,104.5 292.1,106.8 296.3,109.2C300.5,111.6 304.6,115.8 311.3,117.5C318.0,119.2 329.4,118.1 336.3,119.2C343.2,120.3 347.4,122.7 353.0,124.2C358.6,125.7 364.1,126.8 369.7,128.3C375.2,129.8 382.4,132.3 386.3,133.3C390.2,134.3 389.1,133.2 393.0,134.2C396.9,135.2 404.1,137.4 409.7,139.2C415.2,141.0 421.3,143.3 426.3,145.0C431.3,146.7 434.1,148.1 439.7,149.2C445.3,150.3 453.6,150.4 459.7,151.7C465.8,152.9 470.8,155.3 476.3,156.7C481.9,158.1 488.0,159.0 493.0,160.0C498.0,161.0 501.3,162.1 506.3,162.5C511.3,162.9 517.4,162.9 523.0,162.5C528.6,162.1 534.2,160.8 539.7,160.0C545.2,159.2 551.6,158.5 556.3,157.5C561.0,156.5 563.3,156.1 568.0,154.2C572.7,152.2 578.2,149.0 584.7,145.8C591.2,142.6 598.6,138.5 607.0,135.0C615.4,131.5 626.4,127.8 635.3,125.0C644.2,122.2 654.5,119.7 660.3,118.3C666.1,116.9 662.0,117.0 670.3,116.7C678.6,116.4 701.4,116.2 710.3,116.7C719.2,117.2 718.1,117.5 723.7,120.0C729.3,122.5 738.5,128.4 743.7,131.7C748.9,135.0 749.2,135.8 755.0,140.0C760.8,144.2 770.2,151.7 778.3,156.7C786.3,161.7 795.0,166.2 803.3,170.0C811.6,173.8 821.3,176.7 828.3,179.2C835.2,181.7 839.4,184.3 845.0,185.0C850.6,185.7 857.0,184.0 861.7,183.3C866.4,182.6 871.4,181.2 873.3,180.8" fill="none" stroke="#c42424" stroke-width="1.35" stroke-linejoin="round"/>
<path d="M25.0,36.0C28.5,37.7 40.0,43.5 45.8,46.3C51.6,49.1 55.6,50.4 60.0,52.6C64.4,54.8 68.2,55.9 72.2,59.3C76.2,62.7 80.7,69.6 84.3,73.2C87.9,76.8 91.0,78.9 94.0,81.1C97.0,83.3 98.5,83.9 102.5,86.6C106.5,89.3 114.0,95.1 118.3,97.5C122.5,99.9 120.7,100.7 128.0,101.2C135.3,101.7 155.5,100.5 162.0,100.6C168.5,100.7 164.8,100.6 167.0,101.8C169.2,103.0 172.0,105.7 175.4,107.9C178.8,110.1 184.6,113.1 187.6,115.2C190.6,117.3 190.7,118.2 193.3,120.5C195.9,122.8 199.7,126.8 203.0,129.2C206.3,131.6 210.2,134.3 213.0,135.0C215.8,135.7 217.2,134.1 219.7,133.3C222.2,132.5 224.9,130.4 228.0,130.0C231.1,129.6 234.4,132.2 238.0,130.8C241.6,129.4 245.8,124.5 249.7,121.7C253.6,118.9 257.4,115.6 261.3,114.2C265.2,112.8 269.1,114.0 273.0,113.3C276.9,112.6 281.9,110.0 284.7,110.0C287.5,110.0 286.6,110.2 289.7,113.3C292.8,116.3 299.4,124.1 303.0,128.3C306.6,132.5 308.0,136.9 311.3,138.3C314.6,139.7 318.8,137.5 323.0,136.7C327.2,135.9 332.7,133.3 336.3,133.3C339.9,133.3 340.5,135.3 344.7,136.7C348.9,138.1 355.8,140.2 361.3,141.7C366.9,143.2 372.7,144.0 378.0,145.8C383.3,147.6 387.7,150.7 393.0,152.5C398.3,154.3 404.1,154.8 409.7,156.7C415.2,158.6 421.6,162.3 426.3,164.2C431.0,166.1 434.1,167.6 438.0,168.3C441.9,169.0 446.1,168.6 449.7,168.3C453.3,168.0 456.6,166.4 459.7,166.7C462.8,167.0 464.7,168.9 468.0,170.0C471.3,171.1 475.5,172.2 479.7,173.3C483.9,174.4 489.4,175.9 493.0,176.7C496.6,177.5 498.5,178.3 501.3,178.3C504.1,178.3 506.1,177.9 509.7,176.7C513.3,175.4 519.7,171.8 523.0,170.8C526.3,169.8 527.2,171.8 529.7,170.8C532.2,169.8 534.1,167.2 538.0,165.0C541.9,162.8 549.4,158.8 553.0,157.5C556.6,156.2 556.9,158.8 559.7,157.5C562.5,156.2 566.7,152.8 569.7,150.0C572.8,147.2 575.1,143.9 578.0,140.8C580.9,137.8 582.5,136.3 587.0,131.7C591.5,127.1 600.0,117.2 605.3,113.3C610.6,109.4 613.7,110.0 618.7,108.3C623.7,106.6 630.6,104.5 635.3,103.3C640.0,102.0 643.4,101.9 647.0,100.8C650.6,99.7 654.2,97.1 657.0,96.7C659.8,96.3 660.4,98.0 663.7,98.3C667.0,98.6 674.2,98.4 677.0,98.3C679.8,98.2 677.5,96.1 680.3,97.5C683.1,98.9 689.2,104.6 693.7,106.7C698.2,108.8 702.0,107.8 707.0,110.0C712.0,112.2 719.8,117.2 723.7,120.0C727.6,122.8 727.0,122.5 730.3,126.7C733.6,130.9 739.2,139.0 743.7,145.0C748.2,151.0 751.8,156.1 757.0,162.5C762.2,168.9 768.7,176.5 775.0,183.3C781.3,190.1 790.3,199.7 795.0,203.3C799.7,206.9 799.1,204.3 803.3,205.0C807.5,205.7 814.4,206.5 820.0,207.5C825.6,208.5 832.2,210.2 836.7,210.8C841.2,211.4 844.2,211.5 846.7,210.8C849.2,210.1 849.2,209.0 851.7,206.7C854.2,204.3 858.2,199.1 861.7,196.7C865.2,194.3 870.7,193.2 872.5,192.5" fill="none" stroke="#1c1cd0" stroke-width="1.15" stroke-linejoin="round"/>
</g>
<rect x="15" y="38" width="31" height="22" fill="#eeeeee"/>
<rect x="15" y="38" width="31" height="4.5" fill="#cfcfcf"/>
<rect x="19.5" y="46.5" width="9" height="9" rx="1.5" fill="#e03434" stroke="#a01818" stroke-width="1"/>
<rect x="32.5" y="46.5" width="9" height="9" rx="1.5" fill="#2a9ad8" stroke="#1060a0" stroke-width="1"/>
<text x="893" y="75.5" font-size="11" fill="#ffffff">1.1900</text>
<text x="893" y="120.5" font-size="11" fill="#ffffff">1.1850</text>
<text x="893" y="165.5" font-size="11" fill="#ffffff">1.1800</text>
<text x="893" y="211.5" font-size="11" fill="#ffffff">1.1750</text>
<rect x="886" y="170" width="48" height="21" fill="#ffffff"/>
<text x="895" y="184.5" font-size="11" fill="#303540">1.1777</text>
<rect x="16" y="254" width="34" height="13" fill="#3a4148"/>
<g clip-path="url(#cmacd)">
<path d="M25.5 284.5V286.0M29.5 284.5V286.1M33.5 284.5V286.5M37.5 284.5V286.9M41.5 284.5V287.3M45.5 284.5V288.3M49.5 284.5V289.5M53.5 284.5V290.6M57.5 284.5V289.7M61.5 284.5V288.7M65.5 284.5V287.8M69.5 284.5V286.9M73.5 284.5V287.7M77.5 284.5V288.9M81.5 284.5V290.1M85.5 284.5V291.3M89.5 284.5V291.5M93.5 284.5V291.3M97.5 284.5V288.6M101.5 284.5V287.9M105.5 284.5V287.7M109.5 284.5V287.4M114.5 284.5V287.5M118.5 284.5V287.3M126.5 283.0V284.5M130.5 282.4V284.5M134.5 281.6V284.5M138.5 280.7V284.5M142.5 280.2V284.5M146.5 280.0V284.5M150.5 279.8V284.5M154.5 279.6V284.5M158.5 278.9V284.5M162.5 278.7V284.5M166.5 281.6V284.5M174.5 284.5V286.0M178.5 284.5V287.3M182.5 284.5V288.3M186.5 284.5V287.8M190.5 284.5V287.3M194.5 284.5V287.7M198.5 284.5V288.3M202.5 284.5V288.9M206.5 284.5V289.6M210.5 284.5V288.3M219.5 282.6V284.5M223.5 281.1V284.5M227.5 280.0V284.5M231.5 278.8V284.5M235.5 279.2V284.5M239.5 280.1V284.5M243.5 279.1V284.5M247.5 277.9V284.5M251.5 276.7V284.5M255.5 275.7V284.5M259.5 277.1V284.5M263.5 277.5V284.5M267.5 278.8V284.5M271.5 280.1V284.5M275.5 281.2V284.5M279.5 282.2V284.5M283.5 283.0V284.5M287.5 283.0V284.5M291.5 284.5V287.3M295.5 284.5V290.6M299.5 284.5V294.2M303.5 284.5V296.7M307.5 284.5V295.7M312.5 284.5V295.2M316.5 284.5V291.0M320.5 284.5V288.7M324.5 284.5V286.8M332.5 283.0V284.5M336.5 282.0V284.5M340.5 283.0V284.5M360.5 284.5V286.0M364.5 284.5V286.4M368.5 284.5V286.5M372.5 284.5V286.4M376.5 284.5V286.3M380.5 284.5V286.8M384.5 284.5V287.5M388.5 284.5V286.9M392.5 284.5V286.0M396.5 284.5V286.0M400.5 284.5V286.0M404.5 284.5V286.3M408.5 284.5V286.6M413.5 284.5V287.0M417.5 284.5V286.9M421.5 284.5V286.9M425.5 284.5V287.0M429.5 284.5V287.0M433.5 284.5V286.8M437.5 284.5V286.7M441.5 284.5V286.0M449.5 283.0V284.5M453.5 282.3V284.5M457.5 281.9V284.5M461.5 281.8V284.5M465.5 282.9V284.5M505.5 283.0V284.5M510.5 282.3V284.5M514.5 281.2V284.5M518.5 280.1V284.5M522.5 279.2V284.5M526.5 279.8V284.5M530.5 281.6V284.5M534.5 281.0V284.5M538.5 280.1V284.5M542.5 279.5V284.5M546.5 279.6V284.5M550.5 279.6V284.5M554.5 279.5V284.5M558.5 279.6V284.5M562.5 279.7V284.5M566.5 279.8V284.5M570.5 280.2V284.5M574.5 281.5V284.5M578.5 279.9V284.5M582.5 278.6V284.5M586.5 278.0V284.5M590.5 277.9V284.5M594.5 278.7V284.5M598.5 279.2V284.5M602.5 279.2V284.5M607.5 281.2V284.5M611.5 282.7V284.5M619.5 284.5V286.7M623.5 284.5V287.2M627.5 284.5V287.6M631.5 284.5V288.1M635.5 284.5V288.7M639.5 284.5V289.1M643.5 284.5V289.3M647.5 284.5V288.4M651.5 284.5V287.5M655.5 284.5V286.6M659.5 284.5V287.2M663.5 284.5V288.1M667.5 284.5V289.0M671.5 284.5V289.4M675.5 284.5V289.8M679.5 284.5V287.0M683.5 284.5V288.8M687.5 284.5V290.1M691.5 284.5V291.3M695.5 284.5V291.5M699.5 284.5V291.7M703.5 284.5V291.5M708.5 284.5V290.9M712.5 284.5V290.4M716.5 284.5V289.8M720.5 284.5V289.1M724.5 284.5V291.0M728.5 284.5V293.5M732.5 284.5V295.5M736.5 284.5V296.1M740.5 284.5V296.7M744.5 284.5V295.8M748.5 284.5V294.4M752.5 284.5V293.6M756.5 284.5V292.9M760.5 284.5V292.2M764.5 284.5V291.6M768.5 284.5V290.6M772.5 284.5V289.7M776.5 284.5V289.1M780.5 284.5V289.0M784.5 284.5V288.4M788.5 284.5V287.6M792.5 284.5V286.8M800.5 282.2V284.5M805.5 280.6V284.5M809.5 279.4V284.5M813.5 278.2V284.5M817.5 277.5V284.5M821.5 277.1V284.5M825.5 277.0V284.5M829.5 277.9V284.5M833.5 278.8V284.5M837.5 279.1V284.5M841.5 279.1V284.5M845.5 279.1V284.5M849.5 278.4V284.5M853.5 276.4V284.5M857.5 275.0V284.5M861.5 274.0V284.5M865.5 273.9V284.5M869.5 274.7V284.5M873.5 277.5V284.5" stroke="#c02c2c" stroke-width="1.8" fill="none"/>
<polyline points="15.5,285.8 29.7,287.5 43.0,290.8 53.0,296.3 69.7,297.0 78.0,301.7 86.3,306.7 93.0,308.3 98.0,306.3 109.7,306.7 118.0,308.0 128.0,303.0 139.7,297.5 154.7,293.0 161.3,290.0 171.3,294.2 181.3,299.2 191.3,300.0 200.0,303.3 208.3,306.7 220.0,298.3 231.7,291.3 239.2,290.0 250.0,282.5 255.0,278.3 263.3,276.3 280.0,277.0 286.7,277.5 293.3,285.0 303.3,298.3 311.7,302.5 320.0,297.5 328.3,292.5 336.7,288.7 343.3,290.8 356.7,291.3 365.0,292.5 376.7,293.0 385.0,295.0 395.3,294.2 412.0,296.7 428.7,297.5 437.0,297.5 450.3,291.7 460.3,288.7 470.3,290.8 503.7,290.8 513.7,285.8 523.7,280.8 530.3,281.7 540.3,276.7 548.7,275.0 555.3,273.3 567.0,270.8 574.0,270.0 580.7,264.2 589.0,259.2 597.3,258.0 603.2,256.3 609.0,257.5 619.0,262.5 630.7,265.8 642.3,270.0 655.7,270.3 667.3,275.8 675.7,278.7 679.0,276.7 690.7,285.0 700.7,289.2 712.3,291.7 720.7,293.3 731.0,303.3 741.0,310.8 751.0,313.3 764.3,317.0 774.3,317.5 781.0,319.2 792.7,318.0 802.7,311.7 814.3,305.0 824.3,300.0 834.3,298.3 847.7,293.3 854.3,285.8 861.0,280.0 867.7,275.8 873.5,276.3" fill="none" stroke="#1a1a80" stroke-width="1.3" stroke-linejoin="round"/>
<polyline points="17.0,286.2 21.1,286.1 25.1,286.0 29.1,285.8 33.2,286.3 37.2,286.9 41.3,287.5 45.3,288.2 49.3,289.2 53.4,290.3 57.4,291.4 61.5,292.6 65.5,293.7 69.6,294.8 73.6,295.9 77.6,296.9 81.7,298.1 85.7,299.3 89.8,300.5 93.8,301.7 97.8,302.7 101.9,303.1 105.9,303.5 110.0,303.9 114.0,304.4 118.0,305.2 122.1,305.7 126.1,304.9 130.2,304.1 134.2,303.1 138.2,302.0 142.3,301.0 146.3,300.0 150.4,299.0 154.4,298.0 158.5,296.9 162.5,295.9 166.5,294.7 170.6,293.8 174.6,294.3 178.7,294.9 182.7,295.6 186.7,296.4 190.8,297.2 194.8,298.0 198.9,298.9 202.9,299.9 206.9,300.9 211.0,301.6 215.0,301.2 219.1,300.9 223.1,299.8 227.2,298.6 231.2,297.4 235.2,295.9 239.3,294.3 243.3,292.7 247.4,291.1 251.4,289.2 255.4,286.8 259.5,284.5 263.5,283.2 267.6,282.0 271.6,280.8 275.6,280.0 279.7,279.1 283.7,278.4 287.8,279.0 291.8,279.7 295.8,281.5 299.9,283.3 303.9,286.5 308.0,289.7 312.0,291.6 316.1,293.4 320.1,293.3 324.1,292.8 328.2,292.3 332.2,291.8 336.3,291.5 340.3,291.2 344.3,290.9 348.4,290.6 352.4,290.5 356.5,290.5 360.5,290.5 364.5,290.5 368.6,290.6 372.6,290.9 376.7,291.2 380.7,291.5 384.7,291.9 388.8,292.5 392.8,293.0 396.9,293.3 400.9,293.5 405.0,293.8 409.0,294.0 413.0,294.3 417.1,294.5 421.1,294.7 425.2,294.9 429.2,295.0 433.2,295.2 437.3,295.3 441.3,294.7 445.4,294.1 449.4,293.6 453.4,293.0 457.5,292.2 461.5,291.4 465.6,291.3 469.6,291.3 473.7,291.3 477.7,291.3 481.7,291.3 485.8,291.3 489.8,291.3 493.9,291.3 497.9,291.3 501.9,291.3 506.0,290.8 510.0,289.9 514.1,288.9 518.1,288.0 522.1,286.9 526.2,285.7 530.2,284.5 534.3,283.3 538.3,282.2 542.3,281.3 546.4,280.4 550.4,279.4 554.5,278.5 558.5,277.5 562.6,276.6 566.6,275.6 570.6,274.5 574.7,272.7 578.7,270.8 582.8,269.0 586.8,267.1 590.8,265.3 594.9,264.0 598.9,262.8 603.0,261.6 607.0,260.4 611.0,260.3 615.1,260.3 619.1,260.3 623.2,261.0 627.2,261.7 631.3,262.3 635.3,263.3 639.3,264.3 643.4,265.3 647.4,266.3 651.5,267.3 655.5,268.3 659.5,269.3 663.6,270.3 667.6,271.3 671.7,272.3 675.7,273.3 679.7,274.4 683.8,275.6 687.8,277.1 691.9,278.6 695.9,280.1 699.9,281.6 704.0,283.0 708.0,284.4 712.1,285.8 716.1,287.1 720.2,288.6 724.2,290.1 728.2,291.5 732.3,293.3 736.3,295.7 740.4,298.1 744.4,300.5 748.4,302.8 752.5,304.7 756.5,306.5 760.6,308.3 764.6,310.1 768.6,311.2 772.7,312.4 776.7,313.5 780.8,314.6 784.8,315.1 788.8,315.5 792.9,315.8 796.9,316.2 801.0,315.4 805.0,314.3 809.1,313.2 813.1,312.0 817.1,310.6 821.2,308.9 825.2,307.3 829.3,305.7 833.3,304.1 837.3,302.6 841.4,301.1 845.4,299.6 849.5,297.6 853.5,295.1 857.5,292.6 861.6,290.2 865.6,287.7 869.7,285.3 873.7,282.9" fill="none" stroke="#d42020" stroke-width="1.3"/>
<g fill="#e82a2a"><circle cx="17.0" cy="286.2" r="1.4"/><circle cx="21.1" cy="286.1" r="1.4"/><circle cx="25.1" cy="286.0" r="1.4"/><circle cx="29.1" cy="285.8" r="1.4"/><circle cx="33.2" cy="286.3" r="1.4"/><circle cx="37.2" cy="286.9" r="1.4"/><circle cx="41.3" cy="287.5" r="1.4"/><circle cx="45.3" cy="288.2" r="1.4"/><circle cx="49.3" cy="289.2" r="1.4"/><circle cx="53.4" cy="290.3" r="1.4"/><circle cx="57.4" cy="291.4" r="1.4"/><circle cx="61.5" cy="292.6" r="1.4"/><circle cx="65.5" cy="293.7" r="1.4"/><circle cx="69.6" cy="294.8" r="1.4"/><circle cx="73.6" cy="295.9" r="1.4"/><circle cx="77.6" cy="296.9" r="1.4"/><circle cx="81.7" cy="298.1" r="1.4"/><circle cx="85.7" cy="299.3" r="1.4"/><circle cx="89.8" cy="300.5" r="1.4"/><circle cx="93.8" cy="301.7" r="1.4"/><circle cx="97.8" cy="302.7" r="1.4"/><circle cx="101.9" cy="303.1" r="1.4"/><circle cx="105.9" cy="303.5" r="1.4"/><circle cx="110.0" cy="303.9" r="1.4"/><circle cx="114.0" cy="304.4" r="1.4"/><circle cx="118.0" cy="305.2" r="1.4"/><circle cx="122.1" cy="305.7" r="1.4"/><circle cx="126.1" cy="304.9" r="1.4"/><circle cx="130.2" cy="304.1" r="1.4"/><circle cx="134.2" cy="303.1" r="1.4"/><circle cx="138.2" cy="302.0" r="1.4"/><circle cx="142.3" cy="301.0" r="1.4"/><circle cx="146.3" cy="300.0" r="1.4"/><circle cx="150.4" cy="299.0" r="1.4"/><circle cx="154.4" cy="298.0" r="1.4"/><circle cx="158.5" cy="296.9" r="1.4"/><circle cx="162.5" cy="295.9" r="1.4"/><circle cx="166.5" cy="294.7" r="1.4"/><circle cx="170.6" cy="293.8" r="1.4"/><circle cx="174.6" cy="294.3" r="1.4"/><circle cx="178.7" cy="294.9" r="1.4"/><circle cx="182.7" cy="295.6" r="1.4"/><circle cx="186.7" cy="296.4" r="1.4"/><circle cx="190.8" cy="297.2" r="1.4"/><circle cx="194.8" cy="298.0" r="1.4"/><circle cx="198.9" cy="298.9" r="1.4"/><circle cx="202.9" cy="299.9" r="1.4"/><circle cx="206.9" cy="300.9" r="1.4"/><circle cx="211.0" cy="301.6" r="1.4"/><circle cx="215.0" cy="301.2" r="1.4"/><circle cx="219.1" cy="300.9" r="1.4"/><circle cx="223.1" cy="299.8" r="1.4"/><circle cx="227.2" cy="298.6" r="1.4"/><circle cx="231.2" cy="297.4" r="1.4"/><circle cx="235.2" cy="295.9" r="1.4"/><circle cx="239.3" cy="294.3" r="1.4"/><circle cx="243.3" cy="292.7" r="1.4"/><circle cx="247.4" cy="291.1" r="1.4"/><circle cx="251.4" cy="289.2" r="1.4"/><circle cx="255.4" cy="286.8" r="1.4"/><circle cx="259.5" cy="284.5" r="1.4"/><circle cx="263.5" cy="283.2" r="1.4"/><circle cx="267.6" cy="282.0" r="1.4"/><circle cx="271.6" cy="280.8" r="1.4"/><circle cx="275.6" cy="280.0" r="1.4"/><circle cx="279.7" cy="279.1" r="1.4"/><circle cx="283.7" cy="278.4" r="1.4"/><circle cx="287.8" cy="279.0" r="1.4"/><circle cx="291.8" cy="279.7" r="1.4"/><circle cx="295.8" cy="281.5" r="1.4"/><circle cx="299.9" cy="283.3" r="1.4"/><circle cx="303.9" cy="286.5" r="1.4"/><circle cx="308.0" cy="289.7" r="1.4"/><circle cx="312.0" cy="291.6" r="1.4"/><circle cx="316.1" cy="293.4" r="1.4"/><circle cx="320.1" cy="293.3" r="1.4"/><circle cx="324.1" cy="292.8" r="1.4"/><circle cx="328.2" cy="292.3" r="1.4"/><circle cx="332.2" cy="291.8" r="1.4"/><circle cx="336.3" cy="291.5" r="1.4"/><circle cx="340.3" cy="291.2" r="1.4"/><circle cx="344.3" cy="290.9" r="1.4"/><circle cx="348.4" cy="290.6" r="1.4"/><circle cx="352.4" cy="290.5" r="1.4"/><circle cx="356.5" cy="290.5" r="1.4"/><circle cx="360.5" cy="290.5" r="1.4"/><circle cx="364.5" cy="290.5" r="1.4"/><circle cx="368.6" cy="290.6" r="1.4"/><circle cx="372.6" cy="290.9" r="1.4"/><circle cx="376.7" cy="291.2" r="1.4"/><circle cx="380.7" cy="291.5" r="1.4"/><circle cx="384.7" cy="291.9" r="1.4"/><circle cx="388.8" cy="292.5" r="1.4"/><circle cx="392.8" cy="293.0" r="1.4"/><circle cx="396.9" cy="293.3" r="1.4"/><circle cx="400.9" cy="293.5" r="1.4"/><circle cx="405.0" cy="293.8" r="1.4"/><circle cx="409.0" cy="294.0" r="1.4"/><circle cx="413.0" cy="294.3" r="1.4"/><circle cx="417.1" cy="294.5" r="1.4"/><circle cx="421.1" cy="294.7" r="1.4"/><circle cx="425.2" cy="294.9" r="1.4"/><circle cx="429.2" cy="295.0" r="1.4"/><circle cx="433.2" cy="295.2" r="1.4"/><circle cx="437.3" cy="295.3" r="1.4"/><circle cx="441.3" cy="294.7" r="1.4"/><circle cx="445.4" cy="294.1" r="1.4"/><circle cx="449.4" cy="293.6" r="1.4"/><circle cx="453.4" cy="293.0" r="1.4"/><circle cx="457.5" cy="292.2" r="1.4"/><circle cx="461.5" cy="291.4" r="1.4"/><circle cx="465.6" cy="291.3" r="1.4"/><circle cx="469.6" cy="291.3" r="1.4"/><circle cx="473.7" cy="291.3" r="1.4"/><circle cx="477.7" cy="291.3" r="1.4"/><circle cx="481.7" cy="291.3" r="1.4"/><circle cx="485.8" cy="291.3" r="1.4"/><circle cx="489.8" cy="291.3" r="1.4"/><circle cx="493.9" cy="291.3" r="1.4"/><circle cx="497.9" cy="291.3" r="1.4"/><circle cx="501.9" cy="291.3" r="1.4"/><circle cx="506.0" cy="290.8" r="1.4"/><circle cx="510.0" cy="289.9" r="1.4"/><circle cx="514.1" cy="288.9" r="1.4"/><circle cx="518.1" cy="288.0" r="1.4"/><circle cx="522.1" cy="286.9" r="1.4"/><circle cx="526.2" cy="285.7" r="1.4"/><circle cx="530.2" cy="284.5" r="1.4"/><circle cx="534.3" cy="283.3" r="1.4"/><circle cx="538.3" cy="282.2" r="1.4"/><circle cx="542.3" cy="281.3" r="1.4"/><circle cx="546.4" cy="280.4" r="1.4"/><circle cx="550.4" cy="279.4" r="1.4"/><circle cx="554.5" cy="278.5" r="1.4"/><circle cx="558.5" cy="277.5" r="1.4"/><circle cx="562.6" cy="276.6" r="1.4"/><circle cx="566.6" cy="275.6" r="1.4"/><circle cx="570.6" cy="274.5" r="1.4"/><circle cx="574.7" cy="272.7" r="1.4"/><circle cx="578.7" cy="270.8" r="1.4"/><circle cx="582.8" cy="269.0" r="1.4"/><circle cx="586.8" cy="267.1" r="1.4"/><circle cx="590.8" cy="265.3" r="1.4"/><circle cx="594.9" cy="264.0" r="1.4"/><circle cx="598.9" cy="262.8" r="1.4"/><circle cx="603.0" cy="261.6" r="1.4"/><circle cx="607.0" cy="260.4" r="1.4"/><circle cx="611.0" cy="260.3" r="1.4"/><circle cx="615.1" cy="260.3" r="1.4"/><circle cx="619.1" cy="260.3" r="1.4"/><circle cx="623.2" cy="261.0" r="1.4"/><circle cx="627.2" cy="261.7" r="1.4"/><circle cx="631.3" cy="262.3" r="1.4"/><circle cx="635.3" cy="263.3" r="1.4"/><circle cx="639.3" cy="264.3" r="1.4"/><circle cx="643.4" cy="265.3" r="1.4"/><circle cx="647.4" cy="266.3" r="1.4"/><circle cx="651.5" cy="267.3" r="1.4"/><circle cx="655.5" cy="268.3" r="1.4"/><circle cx="659.5" cy="269.3" r="1.4"/><circle cx="663.6" cy="270.3" r="1.4"/><circle cx="667.6" cy="271.3" r="1.4"/><circle cx="671.7" cy="272.3" r="1.4"/><circle cx="675.7" cy="273.3" r="1.4"/><circle cx="679.7" cy="274.4" r="1.4"/><circle cx="683.8" cy="275.6" r="1.4"/><circle cx="687.8" cy="277.1" r="1.4"/><circle cx="691.9" cy="278.6" r="1.4"/><circle cx="695.9" cy="280.1" r="1.4"/><circle cx="699.9" cy="281.6" r="1.4"/><circle cx="704.0" cy="283.0" r="1.4"/><circle cx="708.0" cy="284.4" r="1.4"/><circle cx="712.1" cy="285.8" r="1.4"/><circle cx="716.1" cy="287.1" r="1.4"/><circle cx="720.2" cy="288.6" r="1.4"/><circle cx="724.2" cy="290.1" r="1.4"/><circle cx="728.2" cy="291.5" r="1.4"/><circle cx="732.3" cy="293.3" r="1.4"/><circle cx="736.3" cy="295.7" r="1.4"/><circle cx="740.4" cy="298.1" r="1.4"/><circle cx="744.4" cy="300.5" r="1.4"/><circle cx="748.4" cy="302.8" r="1.4"/><circle cx="752.5" cy="304.7" r="1.4"/><circle cx="756.5" cy="306.5" r="1.4"/><circle cx="760.6" cy="308.3" r="1.4"/><circle cx="764.6" cy="310.1" r="1.4"/><circle cx="768.6" cy="311.2" r="1.4"/><circle cx="772.7" cy="312.4" r="1.4"/><circle cx="776.7" cy="313.5" r="1.4"/><circle cx="780.8" cy="314.6" r="1.4"/><circle cx="784.8" cy="315.1" r="1.4"/><circle cx="788.8" cy="315.5" r="1.4"/><circle cx="792.9" cy="315.8" r="1.4"/><circle cx="796.9" cy="316.2" r="1.4"/><circle cx="801.0" cy="315.4" r="1.4"/><circle cx="805.0" cy="314.3" r="1.4"/><circle cx="809.1" cy="313.2" r="1.4"/><circle cx="813.1" cy="312.0" r="1.4"/><circle cx="817.1" cy="310.6" r="1.4"/><circle cx="821.2" cy="308.9" r="1.4"/><circle cx="825.2" cy="307.3" r="1.4"/><circle cx="829.3" cy="305.7" r="1.4"/><circle cx="833.3" cy="304.1" r="1.4"/><circle cx="837.3" cy="302.6" r="1.4"/><circle cx="841.4" cy="301.1" r="1.4"/><circle cx="845.4" cy="299.6" r="1.4"/><circle cx="849.5" cy="297.6" r="1.4"/><circle cx="853.5" cy="295.1" r="1.4"/><circle cx="857.5" cy="292.6" r="1.4"/><circle cx="861.6" cy="290.2" r="1.4"/><circle cx="865.6" cy="287.7" r="1.4"/><circle cx="869.7" cy="285.3" r="1.4"/><circle cx="873.7" cy="282.9" r="1.4"/></g>
</g>
<text x="17.7" y="265" font-size="11" fill="#1a2070" textLength="28" lengthAdjust="spacingAndGlyphs">MACD</text>
<text x="895" y="291" font-size="11" fill="#ffffff">+0.000</text>
<g clip-path="url(#crsi)">
<line x1="33" y1="333" x2="873" y2="333" stroke="#1a1aa8" stroke-width="2.2"/>
<line x1="16" y1="389" x2="873" y2="389" stroke="#1a1aa8" stroke-width="2.2"/>
<polyline points="15.5,367.0 20.5,359.5 26.3,366.7 34.7,366.7 46.3,376.2 53.0,375.3 61.3,372.0 66.3,372.8 69.7,377.0 76.0,382.0 84.0,384.0 92.0,374.0 96.3,368.7 99.7,375.3 110.0,382.0 121.3,373.7 129.7,360.3 134.7,366.2 139.7,367.0 143.0,361.7 148.0,364.5 151.3,362.3 158.0,365.7 163.0,358.7 166.3,370.3 173.0,382.0 178.0,377.0 189.7,376.2 199.7,386.2" fill="none" stroke="#f0902c" stroke-width="1.2" stroke-linejoin="round"/>
<polyline points="199.7,386.2 205.0,388.7" fill="none" stroke="#d05090" stroke-width="1.2" stroke-linejoin="round"/>
<polyline points="205.0,388.7 210.0,383.7 219.2,353.7 225.0,356.2 227.5,355.3 235.8,363.3 240.0,362.8 243.3,346.2 247.5,347.0 251.7,341.7 260.0,350.3 263.3,349.5 267.5,359.5 280.0,352.3 286.7,361.2 290.8,383.7 295.0,380.3 300.0,388.7" fill="none" stroke="#f0902c" stroke-width="1.2" stroke-linejoin="round"/>
<polyline points="300.0,388.7 303.3,388.3" fill="none" stroke="#d05090" stroke-width="1.2" stroke-linejoin="round"/>
<polyline points="303.3,388.3 306.7,383.7 311.7,382.0 315.8,364.5 323.3,357.0 331.7,359.0 336.7,352.8 340.8,370.3 343.3,371.2 348.3,366.2 355.8,367.8 360.0,363.3 365.0,370.3 369.2,366.2 376.7,369.5 380.0,367.0 384.2,380.3 392.8,366.2 403.7,371.2 408.7,371.7 413.7,379.5 421.2,372.8 425.3,372.8 429.5,377.0 433.7,371.7 437.0,378.7 442.0,361.2 445.3,360.3 449.5,364.5 453.7,358.3 461.2,358.7 465.3,376.2 473.7,367.8 477.8,372.0 485.3,365.7 489.5,370.3 493.7,365.7 497.0,371.2 503.7,362.0 510.3,360.3 514.5,346.7 518.7,352.0 522.0,348.7 526.2,354.5 530.3,366.2 533.7,349.5 537.8,343.7 542.8,352.0 546.2,353.7 555.3,347.0 558.7,361.7 567.0,346.7 570.3,346.7 574.0,342.8 580.7,336.2 589.8,334.5 598.2,338.7" fill="none" stroke="#f0902c" stroke-width="1.2" stroke-linejoin="round"/>
<polyline points="598.2,338.7 602.3,331.7" fill="none" stroke="#d040d8" stroke-width="1.2" stroke-linejoin="round"/>
<polyline points="602.3,331.7 611.5,355.3 614.8,349.5 619.8,352.8 623.2,352.8 627.3,347.0 635.7,354.5 642.3,352.8 651.5,346.7 655.7,347.8 659.0,357.0 667.3,361.2 670.7,356.2 675.7,367.3 679.3,349.0 683.2,370.0 690.7,371.7 695.7,370.3 704.0,370.3 707.3,368.3 715.7,374.0 720.7,375.0" fill="none" stroke="#f0902c" stroke-width="1.2" stroke-linejoin="round"/>
<polyline points="720.7,375.0 727.3,388.7 732.3,397.8 736.5,391.2 740.7,395.3" fill="none" stroke="#2ed82e" stroke-width="1.2" stroke-linejoin="round"/>
<polyline points="740.7,395.3 744.0,386.2 748.2,387.8" fill="none" stroke="#f0902c" stroke-width="1.2" stroke-linejoin="round"/>
<polyline points="748.2,387.8 752.3,385.3 757.3,390.3 762.3,392.8 767.7,390.3 779.3,397.8 785.2,392.8 788.5,395.3 793.5,390.3 796.8,392.0" fill="none" stroke="#2ed82e" stroke-width="1.2" stroke-linejoin="round"/>
<polyline points="796.8,392.0 799.3,376.2 805.2,367.3 809.3,371.2 816.0,370.7 821.8,366.2 827.7,369.5 833.5,376.2 838.5,370.3 846.0,364.5 853.5,335.3 858.5,341.2 863.5,340.3 867.7,342.8 872.7,351.7" fill="none" stroke="#f0902c" stroke-width="1.2" stroke-linejoin="round"/>
</g>
<text x="17.7" y="340" font-size="11" fill="#f08a30" textLength="14.5" lengthAdjust="spacingAndGlyphs">RSI</text>
<text x="893" y="353" font-size="11" fill="#ffffff">60</text>
<text x="893" y="381" font-size="11" fill="#ffffff">40</text>
<line x1="16.5" y1="377" x2="16.5" y2="404" stroke="#c8e4ea" stroke-width="1.8"/>
<rect x="16.5" y="377.5" width="69" height="19" rx="1.5" fill="#5a6a82" stroke="#b8ccd8" stroke-width="1"/>
<text x="51.0" y="391" font-size="11" fill="#f4f4f4" text-anchor="middle">Июнь 2021</text>
<line x1="86.5" y1="377" x2="86.5" y2="404" stroke="#c8e4ea" stroke-width="1.8"/>
<rect x="86.5" y="377.5" width="69" height="19" rx="1.5" fill="#5a6a82" stroke="#b8ccd8" stroke-width="1"/>
<text x="121.0" y="391" font-size="11" fill="#f4f4f4" text-anchor="middle">Июль 2021</text>
<line x1="620.5" y1="377" x2="620.5" y2="404" stroke="#c8e4ea" stroke-width="1.8"/>
<rect x="620.5" y="377.5" width="60" height="19" rx="1.5" fill="#5a6a82" stroke="#b8ccd8" stroke-width="1"/>
<text x="650.5" y="391" font-size="11" fill="#f4f4f4" text-anchor="middle">Авг 2021</text>
<text x="37.2" y="422.5" font-size="11" fill="#f0f0f0" text-anchor="middle">29</text>
<text x="61.5" y="422.5" font-size="11" fill="#f0f0f0" text-anchor="middle">30</text>
<text x="85.7" y="422.5" font-size="11" fill="#f0f0f0" text-anchor="middle">1</text>
<text x="110.0" y="422.5" font-size="11" fill="#f0f0f0" text-anchor="middle">2</text>
<text x="134.2" y="422.5" font-size="11" fill="#f0f0f0" text-anchor="middle">5</text>
<text x="158.5" y="422.5" font-size="11" fill="#f0f0f0" text-anchor="middle">6</text>
<text x="182.7" y="422.5" font-size="11" fill="#f0f0f0" text-anchor="middle">7</text>
<text x="206.9" y="422.5" font-size="11" fill="#f0f0f0" text-anchor="middle">8</text>
<text x="231.2" y="422.5" font-size="11" fill="#f0f0f0" text-anchor="middle">9</text>
<text x="255.4" y="422.5" font-size="11" fill="#f0f0f0" text-anchor="middle">12</text>
<text x="279.7" y="422.5" font-size="11" fill="#f0f0f0" text-anchor="middle">13</text>
<text x="303.9" y="422.5" font-size="11" fill="#f0f0f0" text-anchor="middle">14</text>
<text x="328.2" y="422.5" font-size="11" fill="#f0f0f0" text-anchor="middle">15</text>
<text x="352.4" y="422.5" font-size="11" fill="#f0f0f0" text-anchor="middle">16</text>
<text x="376.7" y="422.5" font-size="11" fill="#f0f0f0" text-anchor="middle">19</text>
<text x="400.9" y="422.5" font-size="11" fill="#f0f0f0" text-anchor="middle">20</text>
<text x="425.2" y="422.5" font-size="11" fill="#f0f0f0" text-anchor="middle">21</text>
<text x="449.4" y="422.5" font-size="11" fill="#f0f0f0" text-anchor="middle">22</text>
<text x="473.7" y="422.5" font-size="11" fill="#f0f0f0" text-anchor="middle">23</text>
<text x="497.9" y="422.5" font-size="11" fill="#f0f0f0" text-anchor="middle">26</text>
<text x="522.1" y="422.5" font-size="11" fill="#f0f0f0" text-anchor="middle">27</text>
<text x="546.4" y="422.5" font-size="11" fill="#f0f0f0" text-anchor="middle">28</text>
<text x="570.6" y="422.5" font-size="11" fill="#f0f0f0" text-anchor="middle">29</text>
<text x="594.9" y="422.5" font-size="11" fill="#f0f0f0" text-anchor="middle">30</text>
<text x="619.1" y="422.5" font-size="11" fill="#f0f0f0" text-anchor="middle">2</text>
<text x="643.4" y="422.5" font-size="11" fill="#f0f0f0" text-anchor="middle">3</text>
<text x="667.6" y="422.5" font-size="11" fill="#f0f0f0" text-anchor="middle">4</text>
<text x="691.9" y="422.5" font-size="11" fill="#f0f0f0" text-anchor="middle">5</text>
<text x="716.1" y="422.5" font-size="11" fill="#f0f0f0" text-anchor="middle">6</text>
<text x="740.4" y="422.5" font-size="11" fill="#f0f0f0" text-anchor="middle">9</text>
<text x="764.6" y="422.5" font-size="11" fill="#f0f0f0" text-anchor="middle">10</text>
<text x="788.8" y="422.5" font-size="11" fill="#f0f0f0" text-anchor="middle">11</text>
<text x="813.1" y="422.5" font-size="11" fill="#f0f0f0" text-anchor="middle">12</text>
<text x="837.3" y="422.5" font-size="11" fill="#f0f0f0" text-anchor="middle">13</text>
<text x="861.6" y="422.5" font-size="11" fill="#f0f0f0" text-anchor="middle">16</text>
<text x="885.8" y="422.5" font-size="11" fill="#f0f0f0" text-anchor="middle">17</text>
</svg></body></html>
